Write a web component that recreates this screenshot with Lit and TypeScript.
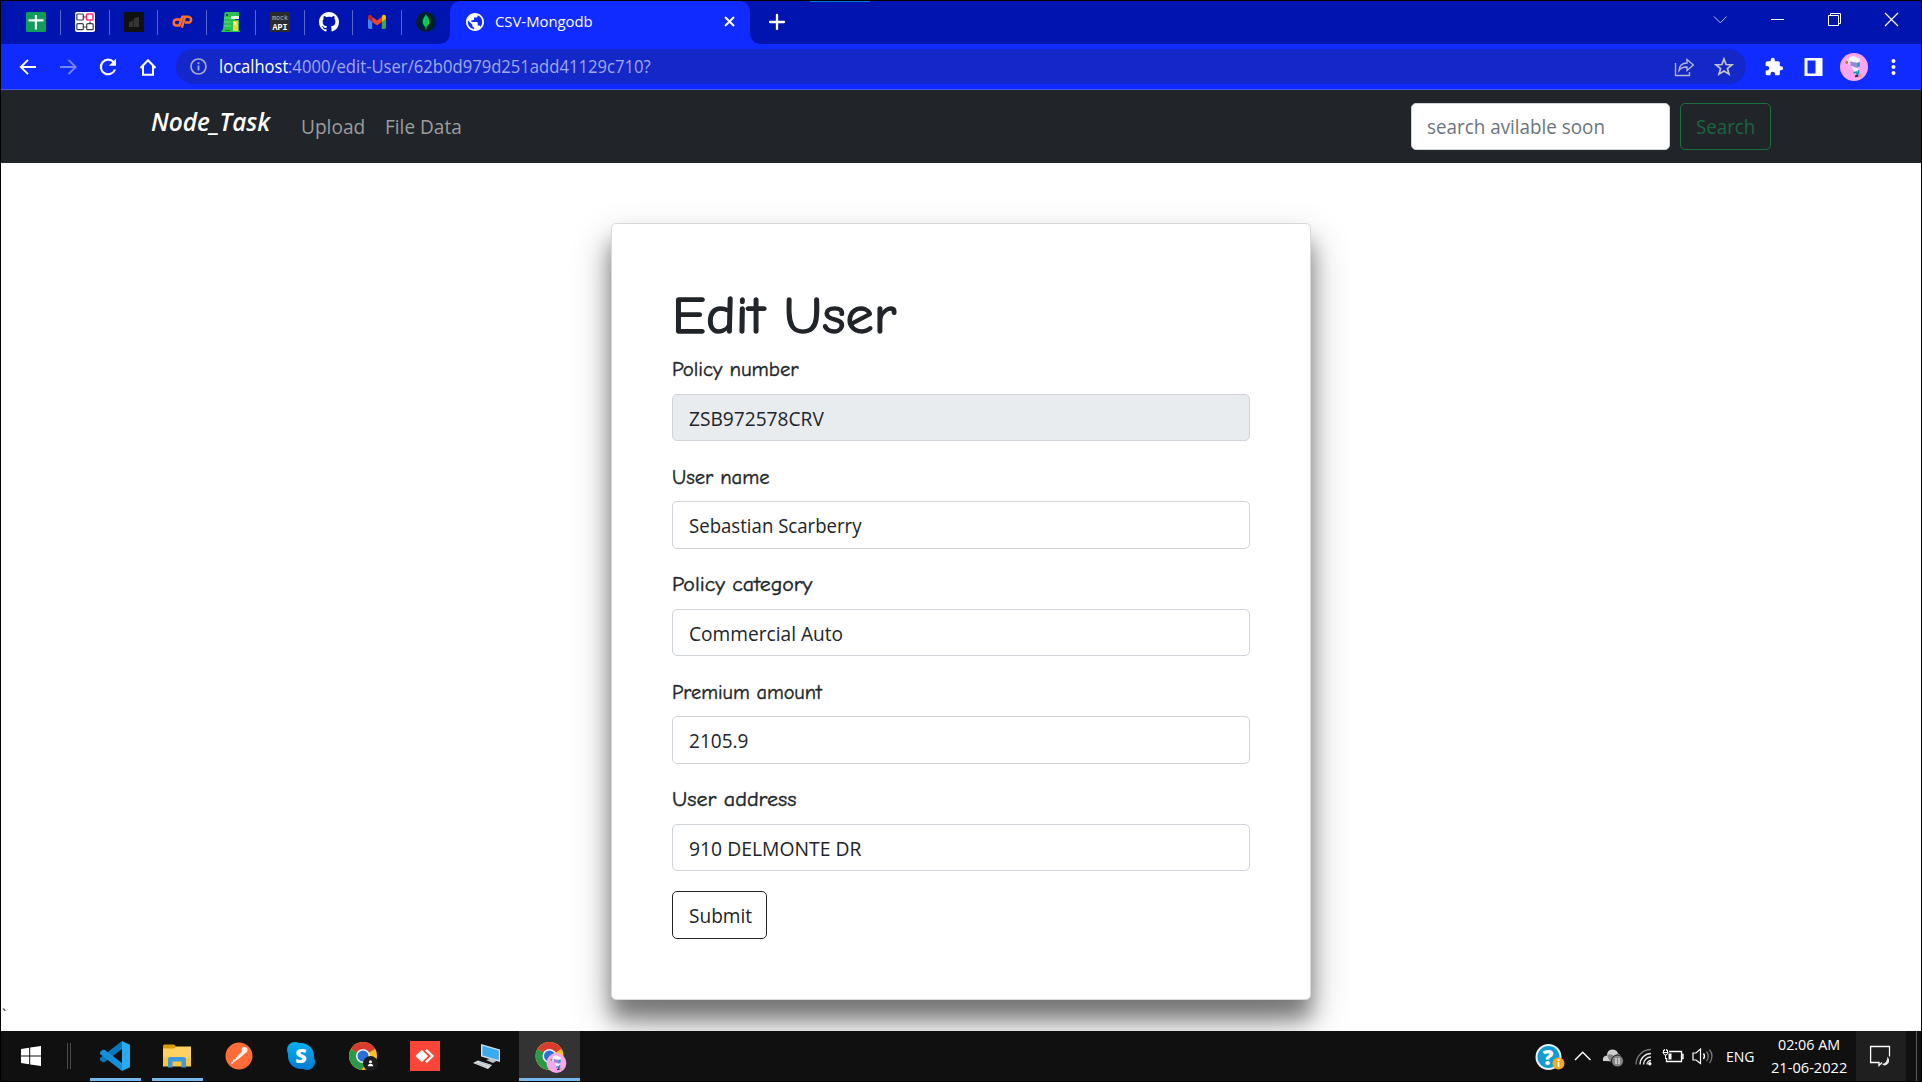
import { LitElement, html, css, svg } from "lit";
import { customElement, property } from "lit/decorators.js";

/** One line of text whose advance is fitted to a given width in pixels. */
@customElement("fit-text")
class FitText extends LitElement {
  @property({ type: Number }) w = 0;
  static styles = css`
    :host { display: inline-block; white-space: nowrap; flex: none; }
    .inner { display: inline-block; transform-origin: 0 50%; }
  `;
  firstUpdated() {
    const inner = this.renderRoot.querySelector(".inner") as HTMLElement;
    const natural = inner.offsetWidth;
    this.style.width = `${this.w}px`;
    if (natural) inner.style.transform = `scaleX(${this.w / natural})`;
  }
  render() {
    return html`<span class="inner"><slot></slot></span>`;
  }
}

const pinned = [
  svg`<rect width="20" height="20" rx="1.5" fill="#0f9d58"/><path d="M8.800 3H11v4.200h6.500v2.200H11V17.500H8.800V9.400H2.500V7.200h6.300z" fill="#fff"/>`,
  svg`<rect width="20" height="20" rx="2" fill="#fff"/><g fill="none" stroke="#3b3b4a" stroke-width="1.200"><rect x="1.800" y="2" width="6.500" height="6" rx="1"/><rect x="1.800" y="11.700" width="6.500" height="6" rx="1"/><rect x="11.700" y="11.700" width="6.500" height="6" rx="1"/><path d="M8.500 5h2.500M8.500 15h3M15 9.500v2"/><rect x="11.500" y="2" width="6.500" height="6" rx="1" stroke="#ff2d78" stroke-width="1.500"/></g>`,
  svg`<rect width="20" height="20" fill="#111"/><path d="M5 10.500l4-2V15H5zM9.500 8Q10 5 15 5v10H9.500z" fill="#353535"/>`,
  svg`<g fill="none" stroke="#ff6c2c" stroke-width="2.500" stroke-linejoin="round"><path d="M8.600 7.600H5a3 3 0 0 0-1 5.900h3.300L10.400 4.800h5.800a2.700 2.700 0 0 1 0 5.800h-3.200M9.800 15.600L12.800 6"/></g>`,
  svg`<path d="M3.500 1Q4 0 5 0h12q1 0 1 1v4H14v3h4v10l1.500 2H0l2-3z" fill="#2cc14e"/><path d="M3 6h8M3 10h7M3 14h7" stroke="#5be074"/><path d="M10 4h8v3h-8z" fill="#dff7e4"/><path d="M12 9h5v10h-5z" fill="#f4d63a"/><path d="M13 10h2v3h-2z" fill="#fff3ae"/><circle cx="6" cy="3" r=".9" fill="#123"/><path d="M4 18.500h5" stroke="#0a8d35"/>`,
  svg`<rect width="20" height="20" fill="#2b2b2e"/><text x="2" y="8" class="mono" font-size="7" fill="#bbb" textLength="16" lengthAdjust="spacingAndGlyphs">mock</text><text x="2.500" y="17.500" class="mono" font-size="9.500" font-weight="700" fill="#fff" textLength="15" lengthAdjust="spacingAndGlyphs">API</text>`,
  svg`<g transform="scale(1.25)"><path fill="#fff" d="M8 0C3.58 0 0 3.58 0 8c0 3.54 2.29 6.53 5.47 7.59.4.07.55-.17.55-.38 0-.19-.01-.82-.01-1.49-2.01.37-2.53-.49-2.69-.94-.09-.23-.48-.94-.82-1.13-.28-.15-.68-.52-.01-.53.63-.01 1.08.58 1.23.82.72 1.21 1.87.87 2.33.66.07-.52.28-.87.51-1.07-1.78-.2-3.64-.89-3.64-3.95 0-.87.31-1.59.82-2.15-.08-.2-.36-1.02.08-2.12 0 0 .67-.21 2.2.82.64-.18 1.32-.27 2-.27s1.36.09 2 .27c1.53-1.04 2.2-.82 2.2-.82.44 1.1.16 1.92.08 2.12.51.56.82 1.27.82 2.15 0 3.07-1.87 3.75-3.65 3.95.29.25.54.73.54 1.48 0 1.07-.01 1.93-.01 2.2 0 .21.15.46.55.38A8.01 8.01 0 0 0 16 8c0-4.42-3.58-8-8-8z"/></g>`,
  svg`<path d="M1 6v9.600a1.400 1.400 0 0 0 1.400 1.400H5.200V9.600z" fill="#4285f4"/><path d="M19 6v9.600a1.400 1.400 0 0 1-1.400 1.400H14.800V9.600z" fill="#34a853"/><path d="M14.800 4.800V10L19 6.800V5c0-2-2-2.800-3.400-1.800z" fill="#fbbc04"/><path d="M5.200 10V4.800L10 8.400l4.800-3.600V10L10 13.600z" fill="#ea4335"/><path d="M1 5v1.800L5.200 10V4.800L4.400 3.200C3 2.200 1 3.200 1 5z" fill="#c5221f"/>`,
  svg`<circle cx="10" cy="10" r="10" fill="#001e2b"/><path d="M10 2.500c2.200 2.800 3.300 4.700 3.300 7.300 0 2.400-1.100 4-2.900 5.200L10.300 17.500h-.6L9.500 15c-1.700-1.200-2.800-2.800-2.800-5.200 0-2.600 1.100-4.500 3.300-7.300z" fill="#00d65f"/><path d="M10 3v14" stroke="#00a344" stroke-width=".8"/>`,
];

const chrome = svg`
  <circle cx="14" cy="14" r="14" fill="#fbc116"/>
  <path d="M14 14L1.900 7A14 14 0 0 1 26.100 7z" fill="#da3b2f"/>
  <path d="M1.900 7A14 14 0 0 0 12.500 27.900L20 17.400 14 14z" fill="#2a9a48"/>
  <path d="M14 7h12.100L24 4.600 14 3z" fill="#da3b2f"/>
  <circle cx="14" cy="14" r="7" fill="#f4f6f8"/><circle cx="14" cy="14" r="5.500" fill="#2a6fdc"/>`;

const mascot = svg`
  <circle cx="14" cy="14" r="14" fill="#fda6ef"/>
  <path d="M8.500 4.500l5-1.500 6.500 3-.5 4-9-1.500z" fill="#f4f8fb"/><path d="M8 6l2.500 2v4.500L6 9.500z" fill="#d6e4ea"/>
  <path d="M10.500 8.500l6 1.500v4.500l-6-2z" fill="#9c84e0"/><path d="M16.500 10l3.500-1v4.500l-3.500 1z" fill="#2ba5bd"/>
  <path d="M11 13l5 2 3 1-1 4-4-2z" fill="#e9f6fa"/><path d="M13.500 20l3-1 1.500 5M18.500 17v4.500" stroke="#1c95ae" stroke-width="1.600" fill="none"/>
  <path d="M15 23.500l3-1" stroke="#303060" stroke-width="2"/><circle cx="6.800" cy="9.500" r="1.400" fill="#b37a3c"/><circle cx="20.500" cy="23" r="1.400" fill="#e0a860"/>`;

const apps = [
  { run: true, icon: svg`<path d="M22 0l8 3.700v22.600L22 30z" fill="#2aa9f3"/><path d="M22 0v8L5 21 2.500 21.200 0 19v-2L22 0z" fill="#0a76bd"/><path d="M2.500 8.800L5 9l17 13v8L0 13v-2z" fill="#168fd8"/>` },
  { run: true, icon: svg`<path d="M1 5q0-1.500 1.500-1.500H12L14.500 6V12H1z" fill="#dd9b03"/><path d="M1 7.500h11L14.500 5.500H29V25H1z" fill="#ffd262"/><path d="M1 17h28v8.500H1z" fill="#fbc63e"/><path d="M6 26.500V18q0-2 2-2h14q2 0 2 2v8.500h-4.500V20.500h-9v6z" fill="#3f97dd"/>` },
  { run: false, icon: svg`<circle cx="15" cy="15" r="13.500" fill="#ff6c37"/><circle cx="20.500" cy="9" r="3" fill="#ffece4"/><path d="M19 9.500l2.500 2.500-7.500 6.500-2.500-1.500z" fill="#fff0e9"/><path d="M19 12l-7 6.500L7.500 22.500M13 18l-4 2" stroke="#fff0e9" stroke-width="1.600" fill="none"/>` },
  { run: false, icon: svg`<defs><linearGradient id="sky" x2="0" y2="30" gradientUnits="userSpaceOnUse"><stop stop-color="#08b3ee"/><stop offset="1" stop-color="#0478d4"/></linearGradient></defs><g fill="url(#sky)"><circle cx="9" cy="9" r="8"/><circle cx="21" cy="21" r="8"/><circle cx="15" cy="15" r="13"/></g><text x="15" y="22" text-anchor="middle" class="sans" font-size="20" font-weight="800" fill="#fff">S</text>` },
  { run: false, icon: svg`<g transform="translate(1 1)">${chrome}</g><circle cx="22.500" cy="22.500" r="7.500" fill="#1b1c1f"/><circle cx="22.500" cy="20.800" r="1.500" fill="#fff"/><path d="M19.800 25.300q0-2.600 2.700-2.600t2.700 2.600z" fill="#fff"/>` },
  { run: false, icon: svg`<rect width="30" height="30" fill="#fb4538"/><path d="M5.500 15l6.300-6.300 6.300 6.300-6.300 6.300z" fill="#fff"/><path d="M16 8.800l6.500 6.200-6.500 6.200" stroke="#fff" stroke-width="2.400" fill="none"/>` },
  { run: false, icon: svg`<path d="M9 3l19 5.500V21L9 15.500z" fill="#d3dde4"/><path d="M10.500 4.800L26.800 9.600v9.500L10.500 14.500z" fill="#3caaf2"/><path d="M14 19l6-1.500 5 2-4 2.500z" fill="#b9c4cb"/><path d="M1 22l5-2.500 14 4.500-4 4z" fill="#dce3e7"/><path d="M4 22l11 4M7 21l11 3.500" stroke="#98a4ac" stroke-width=".7"/>` },
  { run: true, icon: svg`<g transform="translate(.5 1)">${chrome}</g><g transform="translate(11.500 12) scale(.71)">${mascot}</g>` },
];

const fields = [
  { label: "Policy number", lw: 127, value: "ZSB972578CRV", vw: 135, locked: true },
  { label: "User name", lw: 98, value: "Sebastian Scarberry", vw: 173, locked: false },
  { label: "Policy category", lw: 140, value: "Commercial Auto", vw: 154, locked: false },
  { label: "Premium amount", lw: 150, value: "2105.9", vw: 59, locked: false },
  { label: "User address", lw: 124, value: "910 DELMONTE DR", vw: 172, locked: false },
];

@customElement("app-root")
class AppRoot extends LitElement {
  static styles = css`
    :host {
      display: flex; flex-direction: column; box-sizing: border-box;
      width: 1922px; height: 1082px; border: 1px solid #000; overflow: hidden;
      background: #fff; color: #212529;
      font-family: "Segoe UI", "Open Sans", "Noto Sans", sans-serif; font-size: 20px;
    }
    * { box-sizing: border-box; }
    svg { display: block; flex: none; overflow: visible; }
    .sans { font-family: "Open Sans", sans-serif; }
    .mono { font-family: "Liberation Mono", monospace; }

    .strip { display: flex; height: 43px; flex: none; background: #0014b0; padding-left: 11px; position: relative; }
    .pin { width: 48.750px; padding: 11px 0 0 14px; position: relative; flex: none; }
    .sep { position: absolute; right: 0; top: 9px; width: 1px; height: 25px; background: #5965cc; }
    .tab { position: relative; width: 300px; height: 43px; margin-left: -1px; background: #0f2bff; border-radius: 10px 10px 0 0; display: flex; align-items: center; padding: 0 15px 2px 16px; flex: none; }
    .foot { position: absolute; bottom: 0; width: 10px; height: 10px; }
    .foot.l { left: -10px; background: radial-gradient(circle at 0 0, #0014b0 9.500px, #0f2bff 10px); }
    .foot.r { right: -10px; background: radial-gradient(circle at 100% 0, #0014b0 9.500px, #0f2bff 10px); }
    .title { font-size: 15px; line-height: 20px; color: #fff; margin: 0 0 2px 11px; }
    .tabx { margin-left: auto; }
    .plus { margin: 13px 0 0 19px; }
    .glint { position: absolute; top: 0; left: 809px; width: 60px; height: 1px; background: #0078d7; }
    .win { margin-left: auto; display: flex; padding: 8px 20px 0 0; gap: 37px; }

    .bar { display: flex; align-items: center; height: 46px; flex: none; background: #0f2bff; border-bottom: 1px solid #4659e8; padding: 0 14px 0 17px; }
    .navs { display: flex; gap: 20px; width: 158px; flex: none; }
    .omni { display: flex; align-items: center; height: 35px; width: 1570px; border-radius: 18px; background: #1427c8; padding: 0 12.500px 0 14px; }
    .url { font-size: 17.500px; line-height: 24px; color: #a1a9e9; margin: 0 0 2px 12px; }
    .url .host { color: #fff; }
    .omni .end { margin-left: auto; display: flex; gap: 20px; }
    .ext { display: flex; align-items: center; margin-left: 18px; }
    .ext svg + svg { margin-left: 20px; }
    .ext svg.face { margin-left: 16px; }
    .ext svg.dots { margin-left: 15px; }

    .nav { display: flex; height: 73px; flex: none; background: #212529; padding: 13px 150px 13px 150px; align-items: flex-start; color: #9b9d9f; line-height: 47px; }
    .brand { font-size: 25px; font-weight: 600; font-style: italic; color: #fff; line-height: 37px; width: 150px; }
    .upload { width: 83.500px; }
    .find { margin-left: auto; display: flex; gap: 10px; }
    .query { width: 259px; height: 47px; border: 1px solid #ced4da; border-radius: 5px; background: #fff; color: #6c757d; padding: 0 15px; line-height: 46px; }
    .go { width: 91px; height: 47px; border: 1px solid #19703f; border-radius: 5px; color: #1b6441; padding: 0 15px; line-height: 46px; }

    .page { flex: 1; min-height: 0; position: relative; overflow: hidden; padding-top: 60px; }
    .card { width: 700px; height: 777px; margin: 0 auto; border: 1px solid #d9d9d9; border-radius: 5px; background: #fff; padding: 59.500px 60px; box-shadow: 0 19px 40px rgba(0,0,0,.3), 0 19px 20px rgba(0,0,0,.38); }
    .head, .label { font-family: "Comic Sans MS", "Comic Neue", Lato, sans-serif; }
    .head { margin: 0 0 8px; padding-top: 2px; font-size: 52px; font-weight: 500; line-height: 60px; -webkit-text-stroke: 1.300px #212529; }
    .field { margin-bottom: 20px; }
    .label { font-size: 20px; font-weight: 500; line-height: 30px; padding-top: 1.500px; margin-bottom: 8.500px; display: block; -webkit-text-stroke: .4px #212529; }
    .input { height: 47.500px; border: 1px solid #ced4da; border-radius: 5px; padding: 0 15.500px; line-height: 48px; background: #fff; overflow: hidden; }
    .input.locked { background: #e9ecef; }
    .submit { width: 95px; height: 48px; border: 1px solid #212529; border-radius: 5px; padding: 0 15.500px; line-height: 47px; }
    .tick { position: absolute; left: 1px; bottom: 5px; font-size: 15px; line-height: 24px; color: #222; }

    .task { display: flex; height: 50px; flex: none; background: #101010; color: #fff; }
    .start { width: 60px; padding: 15px 0 0 20px; flex: none; }
    .grip { width: 23.500px; display: flex; gap: 2px; padding: 12px 0 0 6px; flex: none; }
    .grip i { width: 1px; height: 26px; background: #4a4a4a; }
    .app { width: 62px; display: flex; flex-direction: column; align-items: center; padding-top: 10px; flex: none; }
    .app svg { margin-left: -2px; }
    .app.active svg { margin-left: 0; }
    .app.active { width: 61px; background: #333; margin-left: .5px; }
    .under { width: 51px; height: 3px; background: #76b9ed; margin-top: 7px; }
    .active .under { width: 61px; }
    .tray { margin-left: auto; display: flex; flex: none; font-size: 15px; }
    .tray svg { margin-top: 10px; }
    .eng { width: 42px; line-height: 50px; }
    .clock { width: 84px; line-height: 23px; text-align: center; display: flex; flex-direction: column; align-items: center; }
    .clock .time { margin-top: 1.500px; margin-left: -2px; }
    .clock .time, .clock .date { height: 23px; }
    .clock .date { margin-left: -2px; }
    .note { width: 50px; background: #1f1f1f; padding-left: 14px; margin-left: 4px; }
    .peek { width: 15px; display: flex; justify-content: flex-end; padding-right: 4px; }
    .peek i { width: 1px; background: #5b5b5b; }
  `;

  private strip() {
    return html`<div class="strip">
      ${pinned.map((p, i) => html`<div class="pin"><svg width="20" height="20" viewBox="0 0 20 20">${p}</svg>${i < pinned.length - 1 ? html`<span class="sep"></span>` : ""}</div>`)}
      <div class="tab">
        <span class="foot l"></span><span class="foot r"></span>
        <svg width="18" height="18" viewBox="2 2 20 20"><path fill="#fff" d="M12 2C6.480 2 2 6.480 2 12s4.480 10 10 10 10-4.480 10-10S17.520 2 12 2zm-1 17.930c-3.950-.490-7-3.850-7-7.930 0-.620.080-1.210.210-1.790L9 15v1c0 1.100.900 2 2 2v1.930zm6.900-2.540c-.260-.810-1-1.390-1.900-1.390h-1v-3c0-.550-.450-1-1-1H8v-2h2c.550 0 1-.450 1-1V7h2c1.100 0 2-.900 2-2v-.410c2.930 1.190 5 4.060 5 7.410 0 2.080-.800 3.970-2.100 5.390z"/></svg>
        <fit-text class="title" w="98">CSV-Mongodb</fit-text>
        <svg class="tabx" width="11" height="11" viewBox="0 0 11 11"><path d="M1 1l9 9M10 1l-9 9" stroke="#fff" stroke-width="1.900"/></svg>
      </div>
      <svg class="plus" width="16" height="16" viewBox="0 0 16 16"><path d="M8 1v14M1 8h14" stroke="#fff" stroke-width="2.300" stroke-linecap="round"/></svg>
      <span class="glint"></span>
      <div class="win">
        <svg width="20" height="20" viewBox="0 0 20 20"><path d="M4 7.500l6.300 6.300 6.300-6.300" fill="none" stroke="#c5caf0"/></svg>
        <svg width="20" height="20" viewBox="0 0 20 20"><path d="M4 10.500h13" stroke="#fff"/></svg>
        <svg width="20" height="20" viewBox="0 0 20 20"><path d="M4.500 6.500h10v10h-10zM6.500 6.500v-2h10v10h-2" fill="none" stroke="#fff"/></svg>
        <svg width="20" height="20" viewBox="0 0 20 20"><path d="M4 4l13 13M17 4L4 17" stroke="#fff" stroke-width="1.200"/></svg>
      </div>
    </div>`;
  }

  private toolbar() {
    return html`<div class="bar">
      <div class="navs">
        <svg width="20" height="20" viewBox="0 0 20 20"><path d="M18 10H3M10 2.800L2.800 10l7.200 7.200" fill="none" stroke="#fff" stroke-width="1.900"/></svg>
        <svg width="20" height="20" viewBox="0 0 20 20"><path d="M2 10h15.500M10.500 2.800L17.700 10l-7.200 7.200" fill="none" stroke="#7786ff" stroke-width="1.900"/></svg>
        <svg width="20" height="20" viewBox="0 0 20 20"><path d="M15.800 5.300A7.300 7.300 0 1 0 17 12.500" fill="none" stroke="#fff" stroke-width="2.100"/><path d="M18 1.700v7.100h-7.100z" fill="#fff"/></svg>
        <svg width="20" height="20" viewBox="0 0 20 20"><path d="M2.500 11L10 3.200l7.500 7.800M5 9v8.700h10V9" fill="none" stroke="#fff" stroke-width="2"/></svg>
      </div>
      <div class="omni">
        <svg width="17" height="17" viewBox="0 0 17 17"><circle cx="8.500" cy="8.500" r="7.500" fill="none" stroke="#a5abc8" stroke-width="1.700"/><path d="M8.500 7.500v5M8.500 4.300v1.900" stroke="#a5abc8" stroke-width="1.800"/></svg>
        <div class="url"><fit-text class="host" w="69">localhost</fit-text><fit-text w="363">:4000/edit-User/62b0d979d251add41129c710?</fit-text></div>
        <div class="end">
          <svg width="20" height="20" viewBox="0 0 20 20"><g fill="none" stroke="#b3b7d0" stroke-width="1.400"><path d="M1.500 6v12.500h14V15"/><path d="M5 13.500q.5-7.300 8-7.500V2.500L19.300 8 13 13.500V10q-5.500-.2-8 3.500z"/></g></svg>
          <svg width="20" height="20" viewBox="0 0 20 20"><path d="M10 2l2.100 5.500 5.900.3-4.600 3.700 1.600 5.700L10 14l-5 3.200 1.600-5.700L2 7.800l5.900-.3z" fill="none" stroke="#c3c6bf" stroke-width="1.700"/></svg>
        </div>
      </div>
      <div class="ext">
        <svg width="20" height="20" viewBox="0 0 24 24"><path fill="#fff" d="M20.500 11H19V7c0-1.100-.9-2-2-2h-4V3.500a2.500 2.500 0 0 0-5 0V5H4c-1.100 0-2 .9-2 2v3.800h1.500a2.700 2.700 0 0 1 0 5.400H2V20c0 1.100.9 2 2 2h3.800v-1.500a2.700 2.700 0 0 1 5.400 0V22H17c1.100 0 2-.9 2-2v-4h1.500a2.500 2.500 0 0 0 0-5z"/></svg>
        <svg width="20" height="20" viewBox="0 0 20 20"><path fill="#fff" fill-rule="evenodd" d="M.5 1h18v18H.5zM3.500 3.500v13h8v-13z"/></svg>
        <svg class="face" width="28" height="28" viewBox="0 0 28 28">${mascot}</svg>
        <svg class="dots" width="20" height="20" viewBox="0 0 20 20"><g fill="#fff"><circle cx="10.500" cy="4" r="2"/><circle cx="10.500" cy="10" r="2"/><circle cx="10.500" cy="16" r="2"/></g></svg>
      </div>
    </div>`;
  }

  private taskbar() {
    return html`<div class="task">
      <div class="start"><svg width="20" height="20" viewBox="0 0 20 20"><path fill="#fff" d="M0 3l8.200-1.200v7.700H0zM9.200 1.600L20 0v9.500H9.200zM0 10.500h8.200v7.700L0 17zM9.200 10.500H20V20L9.200 18.400z"/></svg></div>
      <div class="grip"><i></i><i></i></div>
      ${apps.map((a, i) => html`<div class="app ${i === apps.length - 1 ? "active" : ""}"><svg width="30" height="30" viewBox="0 0 30 30">${a.icon}</svg>${a.run ? html`<span class="under"></span>` : ""}</div>`)}
      <div class="tray">
        <svg width="38" height="30" viewBox="0 0 38 30"><circle cx="13.500" cy="16" r="13" fill="#e9f2f6"/><circle cx="13.500" cy="16" r="11" fill="#159bd3"/><text x="13" y="24" text-anchor="middle" class="sans" font-size="21" font-weight="800" fill="#fff">?</text><circle cx="23.500" cy="22.500" r="6" fill="#f5a81c"/><path d="M23.500 21v5M23.500 18.300v1.700" stroke="#fff" stroke-width="1.700"/></svg>
        <svg width="30" height="30" viewBox="0 0 30 30"><path d="M2 19l7.700-7.700L17.500 19" fill="none" stroke="#fff" stroke-width="1.400"/></svg>
        <svg width="31" height="30" viewBox="0 0 31 30"><path d="M0 20q-1-5 4-5.500Q4 9 9 8.500q5 0 6 4 3 1 3 4v4z" fill="#cfcfcf"/><path d="M4 14.500Q8 12 11 15l4-2.500 3 4v4H7z" fill="#858585"/><circle cx="14.500" cy="20" r="6" fill="#858585" stroke="#151515"/><path d="M13 17v6M16 17v6" stroke="#eee" stroke-width="1.200"/></svg>
        <svg width="27" height="30" viewBox="0 0 27 30"><g fill="none" stroke-width="1.400"><path d="M2 23.500A15 15 0 0 1 17 8.500" stroke="#777"/><path d="M6 23.500A11 11 0 0 1 17 12.500M9.500 23.500A7.500 7.500 0 0 1 17 16M13 23.500a4 4 0 0 1 4-4" stroke="#e5e5e5"/></g><circle cx="15.800" cy="22.700" r="1.700" fill="#fff"/></svg>
        <svg width="30" height="30" viewBox="0 0 30 30"><path d="M8 10.500h12.500v10H5.500V17M20.500 13.500h1.500v4h-1.500" fill="none" stroke="#fff" stroke-width="1.300"/><path d="M7.500 12.500h3v6h-3z" fill="#fff"/><path d="M2.500 9v3q0 2 2 2t2-2V9M1.500 11.500h6M4.500 14v4M3.300 8v2M5.700 8v2" fill="none" stroke="#fff"/></svg>
        <svg width="35" height="30" viewBox="0 0 35 30"><path d="M2 12h3l4.500-4v14.500L5 19H2z" fill="none" stroke="#fff" stroke-width="1.200"/><path d="M12.500 12.500q2 2.700 0 5.500" fill="none" stroke="#fff" stroke-width="1.300"/><path d="M15.500 10.500q3.500 4.700 0 9.500M18.500 8.500q5 6.700 0 13.500" fill="none" stroke="#777" stroke-width="1.300"/></svg>
        <div class="eng"><fit-text w="29">ENG</fit-text></div>
        <div class="clock"><fit-text class="time" w="62">02:06 AM</fit-text><fit-text class="date" w="76">21-06-2022</fit-text></div>
        <div class="note"><svg width="20" height="30" viewBox="0 0 20 30"><path d="M12 21.500l-3 3v-3H.600v-16h18.900v10" fill="none" stroke="#fff" stroke-width="1.300"/><path d="M17.500 15.500q3.500 5-.500 8-3 2-5-.500 5.500-1 5.500-7.500z" fill="#e8e8e8"/></svg></div>
        <div class="peek"><i></i></div>
      </div>
    </div>`;
  }

  render() {
    return html`
      ${this.strip()} ${this.toolbar()}
      <div class="nav">
        <div class="brand"><fit-text w="119">Node_Task</fit-text></div>
        <div class="upload"><fit-text w="64">Upload</fit-text></div>
        <fit-text w="77">File Data</fit-text>
        <div class="find">
          <div class="query"><fit-text w="178">search avilable soon</fit-text></div>
          <div class="go"><fit-text w="59">Search</fit-text></div>
        </div>
      </div>
      <div class="page">
        <div class="card">
          <h1 class="head"><fit-text w="224">Edit User</fit-text></h1>
          ${fields.map((f) => html`<div class="field">
            <span class="label"><fit-text w=${f.lw}>${f.label}</fit-text></span>
            <div class="input ${f.locked ? "locked" : ""}"><fit-text w=${f.vw}>${f.value}</fit-text></div>
          </div>`)}
          <div class="submit"><fit-text w="63">Submit</fit-text></div>
        </div>
        <span class="tick">\`</span>
      </div>
      ${this.taskbar()}
    `;
  }
}
